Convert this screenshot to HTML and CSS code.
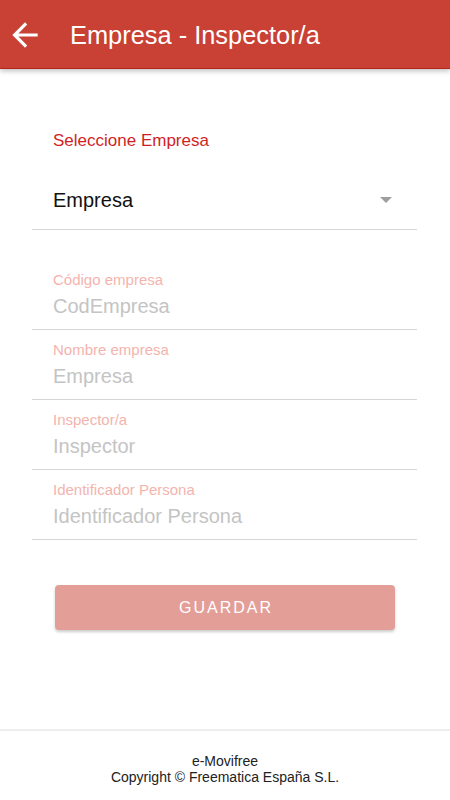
FILE: index.html
```html
<!DOCTYPE html>
<html lang="es">
<head>
  <meta charset="UTF-8">
  <title>Empresa - Inspector/a</title>
  <link rel="stylesheet" href="styles.css">
</head>
<body>
  <header class="toolbar">
    <svg class="back" width="38" height="38" viewBox="0 0 24 24">
      <path d="M20 11H7.83l5.59-5.59L12 4l-8 8 8 8 1.41-1.41L7.83 13H20v-2z" fill="#fff"/>
    </svg>
    <h1>Empresa - Inspector/a</h1>
  </header>

  <main class="content">
    <div class="select-block">
      <div class="select-label">Seleccione Empresa</div>
      <div class="select">
        <span>Empresa</span>
        <span class="caret"></span>
      </div>
    </div>

    <div class="field field-first">
      <div class="field-label">Código empresa</div>
      <div class="field-value">CodEmpresa</div>
    </div>
    <div class="field">
      <div class="field-label">Nombre empresa</div>
      <div class="field-value">Empresa</div>
    </div>
    <div class="field">
      <div class="field-label">Inspector/a</div>
      <div class="field-value">Inspector</div>
    </div>
    <div class="field">
      <div class="field-label">Identificador Persona</div>
      <div class="field-value">Identificador Persona</div>
    </div>

    <button class="save">GUARDAR</button>
  </main>

  <footer class="footer">
    <div>e-Movifree</div>
    <div>Copyright © Freematica España S.L.</div>
  </footer>
</body>
</html>
```

FILE: styles.css
```css
body {
  margin: 0;
  font-family: "Liberation Sans", Arial, sans-serif;
  background: #fff;
  min-height: 100vh;
  display: flex;
  flex-direction: column;
}
.toolbar {
  height: 68px;
  background: #c94034;
  border-bottom: 1px solid #b3261e;
  box-shadow: 0 2px 5px rgba(0,0,0,0.25);
  display: flex;
  align-items: center;
  color: #fff;
}
.back {
  margin-left: 6px;
  margin-top: 1px;
}
.toolbar h1 {
  margin: 2px 0 0 26px;
  font-size: 25.4px;
  font-weight: 400;
}
.content {
  flex: 1;
  margin: 0 33px 0 32px;
  padding-top: 62px;
}
.select-block {
  border-bottom: 1px solid #d6d6d6;
}
.select-label {
  padding-left: 21px;
  color: #d11f1f;
  font-size: 17px;
  line-height: 20px;
}
.select {
  display: flex;
  align-items: center;
  justify-content: space-between;
  padding: 37px 25px 17px 21px;
  font-size: 20px;
  line-height: 24px;
  color: #111;
}
.caret {
  width: 0;
  height: 0;
  border-left: 6px solid transparent;
  border-right: 6px solid transparent;
  border-top: 6px solid #9e9e9e;
}
.field {
  padding: 12px 0 11px 21px;
  border-bottom: 1px solid #d6d6d6;
}
.field-first {
  padding-top: 42px;
}
.field-label {
  font-size: 15px;
  line-height: 16px;
  color: #f4b4ad;
}
.field-value {
  margin-top: 6px;
  font-size: 20px;
  line-height: 24px;
  color: #c4c4c4;
}
.save {
  display: block;
  margin: 45px 0 0 23px;
  width: 340px;
  height: 45px;
  border: none;
  border-radius: 4px;
  background: #e39e97;
  color: #fff;
  font-family: "Liberation Sans", Arial, sans-serif;
  font-size: 16px;
  letter-spacing: 2px;
  text-indent: 2px;
  box-shadow: 0 2px 3px rgba(0,0,0,0.2);
}
.footer {
  border-top: 2px solid #eeeeee;
  padding: 22px 0 15px;
  text-align: center;
  font-size: 14px;
  line-height: 16px;
  color: #222;
}
```
